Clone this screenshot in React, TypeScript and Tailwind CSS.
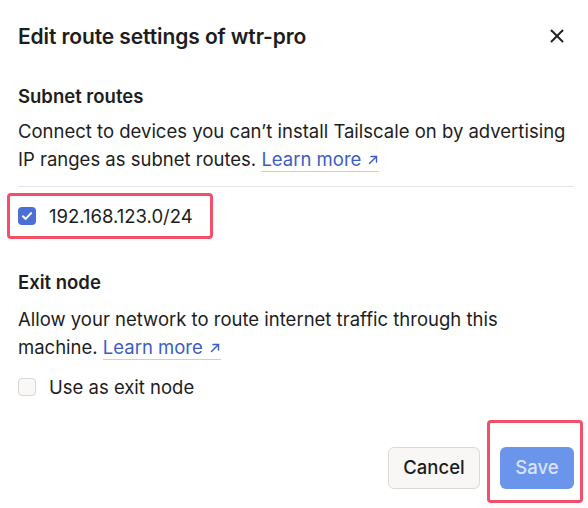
import { useState } from 'react';

function ArrowUpRight() {
  return (
    <svg width="12" height="12" viewBox="0 0 12 12" className="inline-block ml-[6px] -mt-[2px]" fill="none" stroke="currentColor" strokeWidth="1.4" strokeLinecap="round" strokeLinejoin="round">
      <path d="M2.5 9.5 9.5 2.5" />
      <path d="M4 2.5h5.5V8" />
    </svg>
  );
}

function LearnMore() {
  return (
    <a href="#" className="text-[#3b5cc8] border-b border-[#bcd0f7] pb-[1px]">
      Learn more
      <ArrowUpRight />
    </a>
  );
}

function Checkbox({ checked, onChange }: { checked: boolean; onChange: () => void }) {
  return (
    <button
      type="button"
      onClick={onChange}
      className={
        checked
          ? 'w-[18px] h-[18px] rounded-[4px] bg-[#4b6fd5] flex items-center justify-center shrink-0'
          : 'w-[18px] h-[18px] rounded-[4px] bg-[#f9f8f7] border border-[#d9d5d2] shrink-0'
      }
    >
      {checked && (
        <svg width="12" height="12" viewBox="0 0 10 10" fill="none" stroke="white" strokeWidth="1.7" strokeLinecap="round" strokeLinejoin="round">
          <path d="M1.6 5.3 3.9 7.4 8.4 2.6" />
        </svg>
      )}
    </button>
  );
}

export default function App() {
  const [subnet, setSubnet] = useState(true);
  const [exitNode, setExitNode] = useState(false);

  return (
    <div className="w-[588px] h-[508px] bg-white text-[#1d1d1d] pl-[18px] pr-[14px] pt-[22px]" style={{ fontFamily: 'Inter, "Noto Sans", sans-serif' }}>
      <div className="flex items-center justify-between">
        <h1 className="text-[21px] leading-[30px] font-semibold tracking-[-0.1px]">Edit route settings of wtr-pro</h1>
        <button type="button" className="mr-[10px] -mt-[2px] text-[#222]">
          <svg width="14" height="14" viewBox="0 0 14 14" fill="none" stroke="currentColor" strokeWidth="2" strokeLinecap="round">
            <path d="M1.5 1.5 12.5 12.5" />
            <path d="M12.5 1.5 1.5 12.5" />
          </svg>
        </button>
      </div>

      <h2 className="mt-[32px] text-[18.5px] leading-[24px] font-semibold">Subnet routes</h2>
      <p className="mt-[9px] text-[18.5px] leading-[28px]">
        Connect to devices you can’t install Tailscale on by advertising IP ranges as subnet routes. <LearnMore />
      </p>
      <div className="mt-[13px] h-px bg-[#e6e3e1]" />

      <label className="mt-[6px] -ml-[11px] inline-flex items-center gap-[13px] border-[3px] border-[#f44f69] rounded-[4px] pl-[8px] pr-[17px] py-[6px] cursor-pointer">
        <Checkbox checked={subnet} onChange={() => setSubnet(!subnet)} />
        <span className="text-[18.5px] leading-[28px]">192.168.123.0/24</span>
      </label>

      <h2 className="mt-[31px] text-[18.5px] leading-[24px] font-semibold">Exit node</h2>
      <p className="mt-[11px] text-[18.5px] leading-[28px]">
        Allow your network to route internet traffic through this machine. <LearnMore />
      </p>
      <label className="mt-[12px] flex items-center gap-[13px] cursor-pointer">
        <Checkbox checked={exitNode} onChange={() => setExitNode(!exitNode)} />
        <span className="text-[18.5px] leading-[28px]">Use as exit node</span>
      </label>

      <div className="mt-[19px] flex items-end justify-end gap-[7px]">
        <button type="button" className="mb-[14px] h-[42px] w-[92px] rounded-[6px] bg-[#f8f7f5] border border-[#dcd8d5] text-[18.5px] font-medium">
          Cancel
        </button>
        <div className="-mr-[9px] border-[3px] border-[#f44f69] rounded-[4px] pl-[10px] pr-[6px] pt-[24px] pb-[11px]">
          <button type="button" className="h-[42px] w-[74px] rounded-[6px] bg-[#6b95eb] text-[#d8e3fb] text-[18.5px] font-medium">
            Save
          </button>
        </div>
      </div>
    </div>
  );
}
